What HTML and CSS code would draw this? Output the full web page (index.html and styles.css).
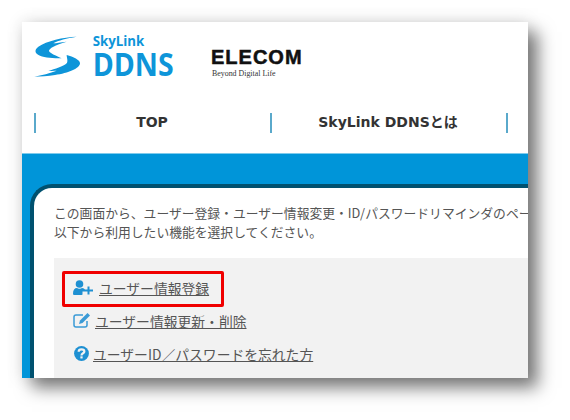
FILE: index.html
```html
<!DOCTYPE html>
<html lang="ja">
<head>
  <meta charset="UTF-8" />
  <title>SkyLink DDNS</title>
  <link rel="stylesheet" href="styles.css">
</head>
<body>

<div class="window">

  <!-- Logos -->
  <div class="logos">
    <svg class="logo-ddns" viewBox="0 0 480 180" width="160" height="60">
      <path fill="#0e95d9" d="M155 35C115 36 65 48 40 65C28 74 28 85 45 92C60 98 85 100 110 100C95 93 75 85 72 78C72 70 90 60 125 50C105 52 95 55 85 55C100 46 125 40 155 35Z" />
      <path fill="#0e95d9" d="M125 90C145 95 165 105 165 115C165 130 130 145 90 150C70 153 45 155 28 155C50 150 75 145 95 137C85 137 75 138 70 138C90 132 115 125 125 115C130 108 125 98 125 90Z" />
      <text class="logo-sky" x="203" y="62" textLength="155" lengthAdjust="spacingAndGlyphs">SkyLink</text>
      <text class="logo-big" x="203" y="152" textLength="243" lengthAdjust="spacingAndGlyphs">DDNS</text>
    </svg>
    <div class="elecom">
      <div class="elecom-name">ELECOM</div>
      <div class="elecom-sub">Beyond Digital Life</div>
    </div>
  </div>

  <!-- Nav -->
  <div class="nav">
    <div class="nav-item">TOP</div>
    <div class="nav-item">SkyLink DDNSとは</div>
    <div class="nav-item"></div>
  </div>

  <div class="band">
    <div class="panel">
      <p class="intro">この画面から、ユーザー登録・ユーザー情報変更・ID/パスワードリマインダのページへ移動できます。<br>以下から利用したい機能を選択してください。</p>

      <div class="menu">
        <div class="highlight"></div>

        <div class="menu-row">
          <svg class="icon-add" viewBox="0 0 20 15" width="20" height="15">
            <circle cx="6.5" cy="4" r="3.8" fill="#1e90d2" />
            <path fill="#1e90d2" d="M0 13.5C0 10 1.5 8 4 8C5 9 8 9 9 8C10.5 8 11.5 8.7 12 10H11V11.5H9.5V14.5C9.5 14.8 9 15 8.5 15H1.5C.5 15 0 14.5 0 13.5Z" />
            <path fill="#1e90d2" d="M14.5 6.5H16.5V9.5H20V11.5H16.5V14.5H14.5V11.5H11V9.5H14.5Z" />
          </svg>
          <a href="#" class="link">ユーザー情報登録</a>
        </div>

        <div class="menu-row">
          <svg class="icon-edit" viewBox="0 0 18 16" width="18" height="16">
            <path fill="none" stroke="#3a9ad6" stroke-width="1.5" d="M14 9V13C14 14.2 13.2 15 12 15H3C1.800 15 1 14.200 1 13V5C1 3.800 1.800 3 3 3H10" />
            <path fill="#3a9ad6" d="M14.500 1L17 3.500L9.500 11L6 12L7 8.500Z" />
          </svg>
          <a href="#" class="link">ユーザー情報更新・削除</a>
        </div>

        <div class="menu-row">
          <svg class="icon-help" viewBox="0 0 16 16" width="15" height="15">
            <circle cx="8" cy="8" r="7.900" fill="#1e90d2" />
            <path fill="none" stroke="#f2f2f2" stroke-width="2.400" d="M5 6.200C5 4.500 6.300 3.700 8 3.700C9.700 3.700 11 4.600 11 6C11 7.800 8 7.800 8 10" />
            <rect x="6.800" y="11" width="2.400" height="2.300" fill="#f2f2f2" />
          </svg>
          <a href="#" class="link">ユーザーID／パスワードを忘れた方</a>
        </div>
      </div>
    </div>
  </div>

</div>

</body>
</html>
```

FILE: styles.css
```css
html, body {
  height: 100%;
}
body {
  margin: 0;
  background: #fff;
  overflow: hidden;
  font-family: "Noto Sans CJK JP", "Open Sans", sans-serif;
}
.window {
  margin: 22px 0 0 22px;
  width: 506px;
  height: 356px;
  background: #fff;
  overflow: hidden;
  display: flex;
  flex-direction: column;
  box-shadow: 10px 10px 16px rgba(0,0,0,0.5), 0 0 16px rgba(0,0,0,0.12);
}
.logos {
  height: 91px;
  display: flex;
  align-items: flex-start;
  flex: none;
}
.logo-ddns {
  margin: 3px 0 0 3px;
  flex: none;
}
.elecom {
  margin: 25px 0 0 26px;
  width: 94px;
  flex: none;
}
.logo-sky {
  font-family: "Open Sans", sans-serif;
  font-weight: 700;
  font-size: 44px;
  fill: #0e95d9;
}
.logo-big {
  font-family: "Open Sans", sans-serif;
  font-weight: 700;
  font-size: 98px;
  fill: #0e95d9;
}
.elecom-name {
  font-family: "Liberation Sans", sans-serif;
  font-weight: bold;
  font-size: 20px;
  line-height: 20px;
  letter-spacing: 1px;
  color: #111;
  -webkit-text-stroke: 0.5px #111;
}
.elecom-sub {
  margin: 2px 0 0 1px;
  font-family: "Liberation Serif", serif;
  font-size: 7.900px;
  line-height: 10px;
  color: #333;
  white-space: nowrap;
}
.nav {
  height: 40px;
  padding-left: 12px;
  display: flex;
  align-items: flex-start;
  flex: none;
}
.nav-item {
  width: 236px;
  height: 20px;
  flex: none;
  border-left: 2px solid #5aa9cb;
  display: flex;
  justify-content: center;
  align-items: center;
  color: #333;
  font-family: "DejaVu Sans", "Noto Sans CJK JP", sans-serif;
  font-weight: bold;
  font-size: 14px;
  line-height: 18px;
  padding: 0 2px 2px 0;
  box-sizing: border-box;
}
.band {
  flex: 1;
  background: #0095d9;
  border-top: 1px solid #7fcbec;
  padding: 30px 0 0 8px;
  min-height: 0;
}
.panel {
  margin-right: -30px;
  height: 100%;
  box-sizing: border-box;
  background: #fff;
  border-top: 4px solid #00516f;
  border-left: 4px solid #00516f;
  border-top-left-radius: 22px;
  padding: 15px 0 0 20px;
}
.intro {
  margin: 0 0 17px;
  color: #555;
  font-size: 12.800px;
  line-height: 19px;
  white-space: nowrap;
}
.menu {
  position: relative;
  background: #f2f2f2;
  padding: 13px 0 20px 19px;
}
.menu-row {
  height: 33px;
  display: flex;
  align-items: center;
  gap: 5px;
  white-space: nowrap;
}
.link {
  color: #555;
  font-size: 13.800px;
}
.icon-add {
  margin-right: 1px;
  flex: none;
}
.icon-edit {
  margin: -2px -1px 0 0;
  flex: none;
}
.icon-help {
  margin: 0 -1px 0 1px;
  flex: none;
}
/* red annotation box drawn over the first row */
.highlight {
  position: absolute;
  left: 8px;
  top: 13px;
  width: 156px;
  height: 30px;
  border: 3px solid #f00000;
  border-radius: 2px;
}
```
